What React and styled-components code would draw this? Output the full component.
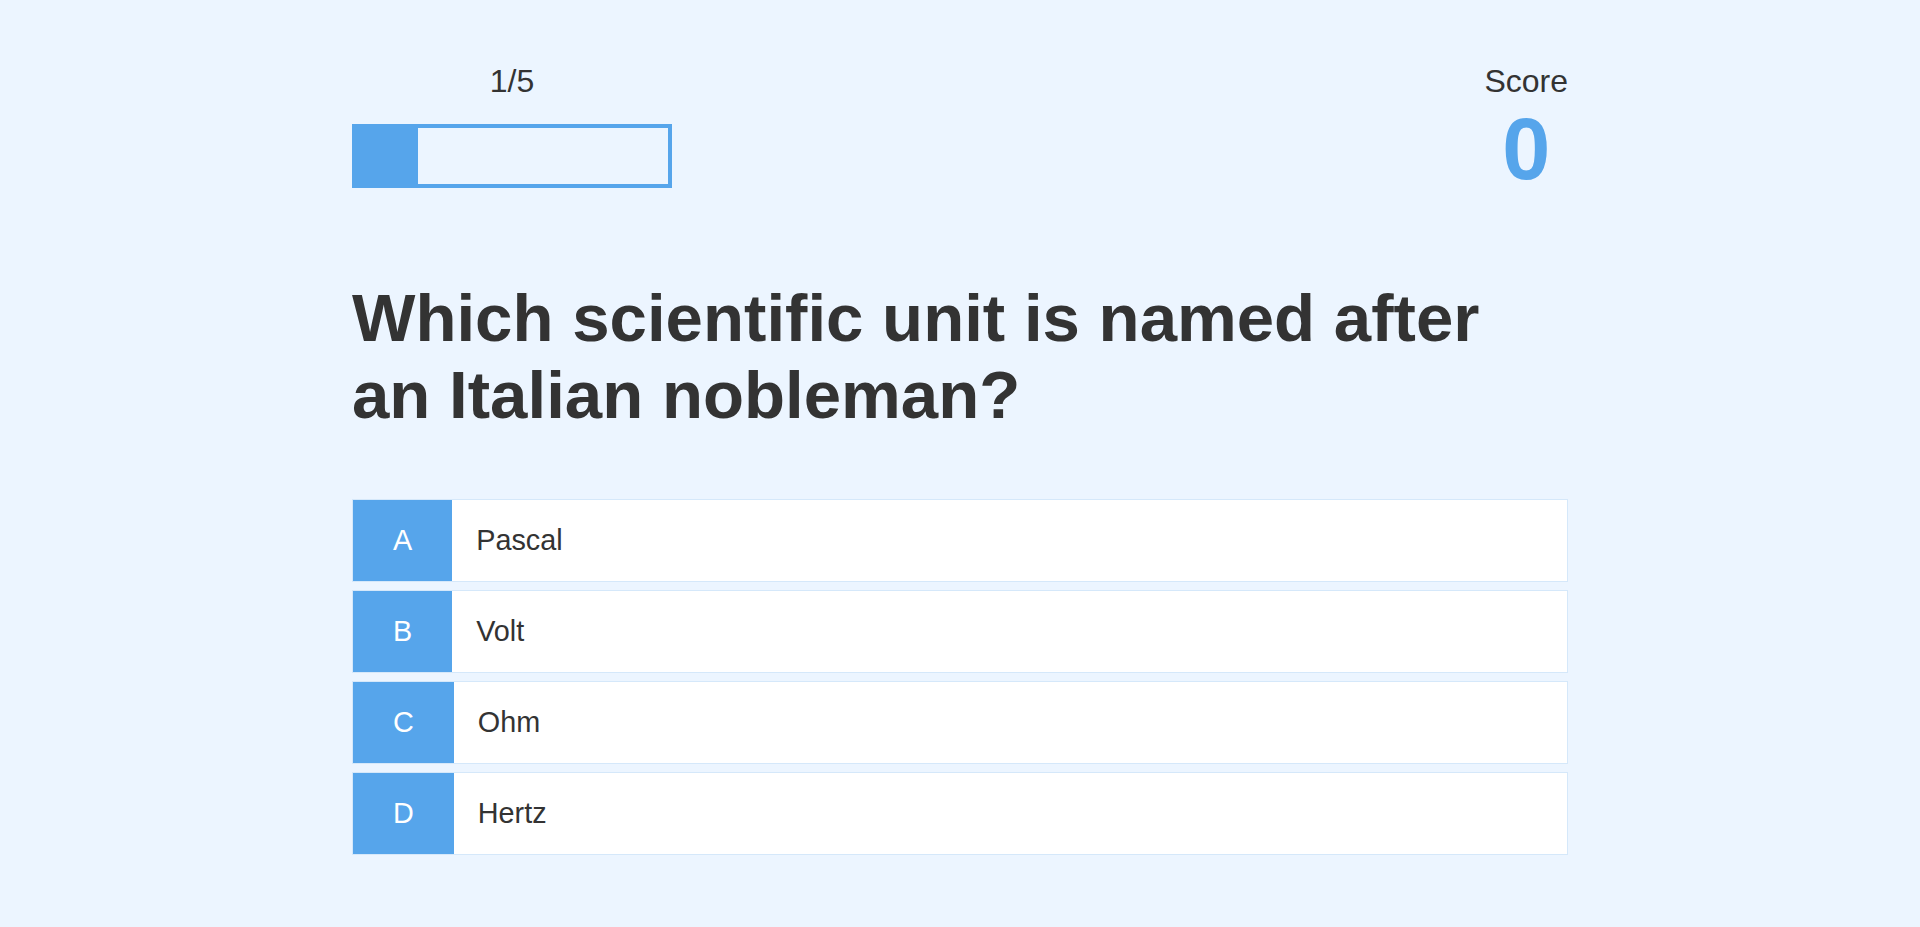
import styled, { createGlobalStyle } from 'styled-components';

const GlobalStyle = createGlobalStyle`
    html, body {
        margin: 0;
        padding: 0;
        background-color: #ecf5ff;
    }

    * {
        box-sizing: border-box;
        font-family: "Liberation Sans", Arial, Helvetica, sans-serif;
        margin: 0;
        padding: 0;
        color: #333;
    }
`;

const question = {
    text: 'Which scientific unit is named after an Italian nobleman?',
    choices: ['Pascal', 'Volt', 'Ohm', 'Hertz'],
};

const letters = ['A', 'B', 'C', 'D'];

function App() {
    const current = 1;
    const total = 5;
    const score = 0;

    return (
        <>
            <GlobalStyle />
            <Container>
                <Game>
                    <Hud>
                        <HudItem>
                            <HudPrefix>{current}/{total}</HudPrefix>
                            <ProgressBar>
                                <ProgressFill style={{ width: `${(current / total) * 100}%` }} />
                            </ProgressBar>
                        </HudItem>
                        <HudItem>
                            <HudPrefix>Score</HudPrefix>
                            <ScoreText>{score}</ScoreText>
                        </HudItem>
                    </Hud>
                    <Question>{question.text}</Question>
                    {question.choices.map((choice, i) => (
                        <Choice key={choice}>
                            <ChoicePrefix>{letters[i]}</ChoicePrefix>
                            <ChoiceText>{choice}</ChoiceText>
                        </Choice>
                    ))}
                </Game>
            </Container>
        </>
    );
}

const Container = styled.div`
    width: 100vw;
    height: 100vh;
    max-width: 1280px;
    margin: 0 auto;
    padding: 25px 32px 35px; // nudged up a bit to line up with the original
`;

const Game = styled.div`
    height: 100%;
    display: flex;
    flex-direction: column;
    justify-content: center;
`;

const Hud = styled.div`
    display: flex;
    justify-content: space-between;
`;

const HudItem = styled.div`
    display: flex;
    flex-direction: column;
    align-items: center;
`;

const HudPrefix = styled.p`
    text-align: center;
    font-size: 32px;
`;

const ProgressBar = styled.div`
    width: 320px;
    height: 64px;
    border: 4px solid #56a5eb;
    margin-top: 24px;
`;

const ProgressFill = styled.div`
    height: 100%;
    background-color: #56a5eb;
`;

const ScoreText = styled.h1`
    font-size: 86.4px;
    color: #56a5eb;
    margin-bottom: 80px;
    text-align: center;
`;

const Question = styled.h2`
    font-size: 67.2px;
    font-weight: 700;
    margin-bottom: 66px;
`;

const Choice = styled.div`
    display: flex;
    width: 100%;
    margin-bottom: 8px;
    font-size: 28.8px;
    border: 1px solid rgba(86, 165, 235, 0.25);
    background-color: white;

    &:last-child {
        margin-bottom: 0;
    }
`;

const ChoicePrefix = styled.p`
    padding: 24px 40px;
    background-color: #56a5eb;
    color: white;
`;

const ChoiceText = styled.p`
    padding: 24px;
    width: 100%;
`;

export default App;
